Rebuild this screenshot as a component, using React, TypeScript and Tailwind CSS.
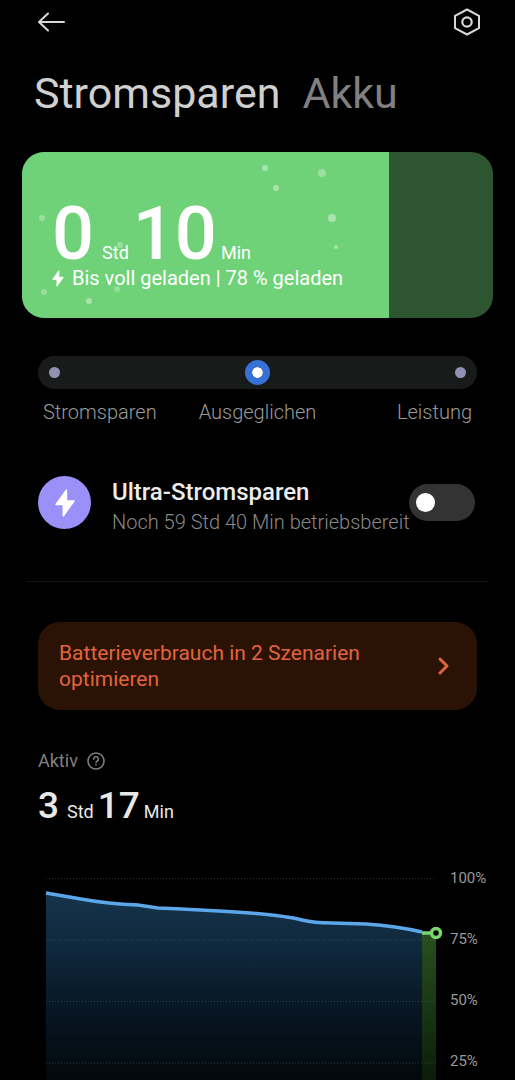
import { useState } from 'react';

const bubbles = [
  { x: 20, y: 66, r: 3, o: 0.3 },
  { x: 98, y: 93, r: 3, o: 0.3 },
  { x: 22, y: 140, r: 3, o: 0.25 },
  { x: 95, y: 137, r: 3, o: 0.25 },
  { x: 67, y: 149, r: 3, o: 0.4 },
  { x: 243, y: 16, r: 3, o: 0.4 },
  { x: 254, y: 36, r: 3, o: 0.4 },
  { x: 300, y: 21, r: 4, o: 0.3 },
  { x: 310, y: 66, r: 4, o: 0.4 },
  { x: 314, y: 95, r: 2, o: 0.4 },
];

const modes = [
  { id: 'save', label: 'Stromsparen', align: 'text-left' },
  { id: 'balanced', label: 'Ausgeglichen', align: 'text-center' },
  { id: 'performance', label: 'Leistung', align: 'text-right' },
];

const levels = ['100%', '75%', '50%', '25%'];

function BoltIcon({ className }: { className: string }) {
  return (
    <svg viewBox="0 0 20 28" fill="currentColor" className={className} aria-hidden="true">
      <path
        d="M11.500 1 1 15.500h7.200V27L19 12h-7.500z"
        stroke="currentColor"
        strokeWidth="1.400"
        strokeLinejoin="round"
      />
    </svg>
  );
}

function BatteryCard() {
  return (
    <section className="relative overflow-hidden rounded-[22px] bg-[#2c5530] px-[30px] pt-[50px] pb-7 text-white">
      <div className="absolute inset-y-0 left-0 w-[78%] bg-[#70d278]" />
      <svg className="absolute top-0 left-0 h-[166px] w-[368px]" viewBox="0 0 368 166" aria-hidden="true">
        {bubbles.map((b) => (
          <circle key={`${b.x}-${b.y}`} cx={b.x} cy={b.y} r={b.r} fill="#fff" opacity={b.o} />
        ))}
      </svg>
      <div className="relative">
        <p className="flex items-baseline">
          <span className="text-[74px] leading-[64px] font-medium">0</span>
          <span className="ml-2 text-[18px] leading-none">Std</span>
          <span className="ml-1 text-[74px] leading-[64px] font-medium">10</span>
          <span className="ml-1 text-[18px] leading-none">Min</span>
        </p>
        <p className="flex items-center gap-2 text-[20px] leading-6">
          <BoltIcon className="h-[17px] w-3" />
          Bis voll geladen | 78 % geladen
        </p>
      </div>
    </section>
  );
}

function ModePicker() {
  const [mode, setMode] = useState('balanced');

  return (
    <fieldset className="mx-4 mt-[38px]">
      <div className="flex h-[33px] items-center justify-between rounded-full bg-[#191b1a] px-1">
        {modes.map((m) => (
          <input
            key={m.id}
            id={m.id}
            type="radio"
            name="mode"
            checked={mode === m.id}
            onChange={() => setMode(m.id)}
            className="size-[25px] appearance-none rounded-full border-[7px] border-transparent bg-[#9390b4] bg-clip-padding checked:border-[#3672d6] checked:bg-white"
          />
        ))}
      </div>
      <div className="mt-2.5 grid grid-cols-3 px-[5px] text-[20px] leading-[26px] font-light text-[#9a9a9a]">
        {modes.map((m) => (
          <label key={m.id} htmlFor={m.id} className={m.align}>
            {m.label}
          </label>
        ))}
      </div>
    </fieldset>
  );
}

function UltraSaving() {
  const [enabled, setEnabled] = useState(false);

  return (
    <section className="mx-4 mt-[41px] flex items-center">
      <span className="flex size-[53px] shrink-0 items-center justify-center rounded-full bg-[#9b8ff8] text-white">
        <BoltIcon className="h-7 w-5" />
      </span>
      <label htmlFor="ultra" className="ml-[21px] min-w-0 flex-1 pt-[13px] whitespace-nowrap">
        <span className="block text-[24px] leading-[26px] font-medium text-[#ececec]">Ultra-Stromsparen</span>
        <span className="block text-[20px] leading-[34px] font-light text-[#8a8a8a]">
          Noch 59 Std 40 Min betriebsbereit
        </span>
      </label>
      <input
        id="ultra"
        type="checkbox"
        role="switch"
        checked={enabled}
        onChange={() => setEnabled(!enabled)}
        className="mr-0.5 flex h-[37px] w-[66px] shrink-0 appearance-none items-center rounded-full bg-[#333333] px-[7px] before:size-[19px] before:rounded-full before:bg-white checked:justify-end checked:bg-[#3672d6]"
      />
    </section>
  );
}

function UsageChart() {
  return (
    <section className="mt-[49px] mr-1 ml-6 flex items-start">
      <svg viewBox="0 0 390 202" className="min-w-0 flex-1 overflow-visible" role="img" aria-label="Akkuverlauf">
        <defs>
          <linearGradient id="blue" x1="0" y1="0" x2="0" y2="1">
            <stop offset="0" stopColor="#15344b" />
            <stop offset="0.35" stopColor="#0e2539" />
            <stop offset="0.6" stopColor="#071724" />
            <stop offset="1" stopColor="#02080c" />
          </linearGradient>
          <linearGradient id="green" x1="0" y1="0" x2="0" y2="1">
            <stop offset="0" stopColor="#28501f" />
            <stop offset="1" stopColor="#0c1c0a" />
          </linearGradient>
        </defs>
        <path
          d="M0 15 L35 21 Q62 26 92 27 L112 30 Q160 32 204 35 Q240 38 256 42 Q268 45 286 45 L320 46 Q350 48 376 54 V204 H0Z"
          fill="url(#blue)"
        />
        <path d="M376 55H390V204H376Z" fill="url(#green)" />
        {levels.map((level, i) => (
          <line
            key={level}
            x1="0"
            x2="390"
            y1={i * 61.5 + 0.5}
            y2={i * 61.5 + 0.5}
            stroke="#8fa0aa"
            strokeOpacity="0.3"
            strokeDasharray="1 2"
          />
        ))}
        <path
          d="M0 15 L35 21 Q62 26 92 27 L112 30 Q160 32 204 35 Q240 38 256 42 Q268 45 286 45 L320 46 Q350 48 376 54"
          fill="none"
          stroke="#5ba7ea"
          strokeWidth="3.5"
        />
        <path d="M376 55H386" stroke="#79d66f" strokeWidth="3.5" />
        <circle cx="390" cy="55" r="4.5" fill="#000" stroke="#79d66f" strokeWidth="3.5" />
      </svg>
      <ul className="-mt-3 ml-3.5 flex w-[39px] flex-col gap-[37px] text-[15px] leading-6 text-[#999999]">
        {levels.map((level) => (
          <li key={level}>{level}</li>
        ))}
      </ul>
    </section>
  );
}

export default function App() {
  return (
    <main className="min-h-screen overflow-hidden bg-black px-[22px] font-[Roboto,sans-serif]">
      <header className="flex h-11 items-center justify-between px-3">
        <button type="button" aria-label="Zurück" className="ml-1 text-[#d8d8d8]">
          <svg viewBox="0 0 30 22" fill="none" stroke="currentColor" strokeWidth="2" strokeLinecap="round" strokeLinejoin="round" className="h-[22px] w-[30px]">
            <path d="M26 11H1M10 2.500 1 11l9 8.500" />
          </svg>
        </button>
        <button type="button" aria-label="Einstellungen" className="text-[#d8d8d8]">
          <svg viewBox="0 0 28 28" fill="none" stroke="currentColor" strokeWidth="2" strokeLinejoin="round" className="size-7">
            <path d="M14 1.500 26 7.800v12.400L14 26.500 2 20.200V7.800z" />
            <circle cx="14" cy="14" r="4.700" strokeWidth="2.200" />
          </svg>
        </button>
      </header>

      <nav className="mt-[19px] mb-[29px] ml-3 flex gap-[22px] text-[43px] leading-[60px]">
        <button type="button" className="text-[#d0d0d0]">
          Stromsparen
        </button>
        <button type="button" className="text-[#808080]">
          Akku
        </button>
      </nav>

      <BatteryCard />
      <ModePicker />
      <UltraSaving />

      <hr className="mx-1 mt-[42px] border-[#141414]" />

      <button
        type="button"
        className="mx-4 mt-10 flex w-[calc(100%-32px)] items-center justify-between rounded-[22px] bg-[#2a1205] py-[18px] pr-6 pl-[21px] text-left text-[21px] leading-[26px] text-[#e2643c]"
      >
        <span className="max-w-[320px]">Batterieverbrauch in 2 Szenarien optimieren</span>
        <svg viewBox="0 0 20 20" fill="none" stroke="currentColor" strokeWidth="3" strokeLinecap="round" strokeLinejoin="round" className="size-5" aria-hidden="true">
          <path d="m7 3 7 7-7 7" />
        </svg>
      </button>

      <section className="mx-4 mt-[39px]">
        <h2 className="flex items-center gap-2 text-[18px] leading-6 text-[#808080]">
          Aktiv
          <button type="button" aria-label="Hilfe">
            <svg viewBox="0 0 20 20" fill="none" stroke="currentColor" strokeWidth="1.500" strokeLinecap="round" className="size-5">
              <circle cx="10" cy="10" r="8" />
              <path d="M7.700 8.200a2.300 2.300 0 1 1 3.300 2c-.7.400-1 .8-1 1.500M10 13.800v.1" />
            </svg>
          </button>
        </h2>
        <p className="mt-2.5 flex items-baseline text-[#e8e8e8]">
          <span className="text-[37px] leading-[46px] font-medium">3</span>
          <span className="ml-2 text-[18px] leading-none">Std</span>
          <span className="ml-1 text-[37px] leading-[46px] font-medium">17</span>
          <span className="ml-1 text-[18px] leading-none">Min</span>
        </p>
      </section>

      <UsageChart />
    </main>
  );
}
